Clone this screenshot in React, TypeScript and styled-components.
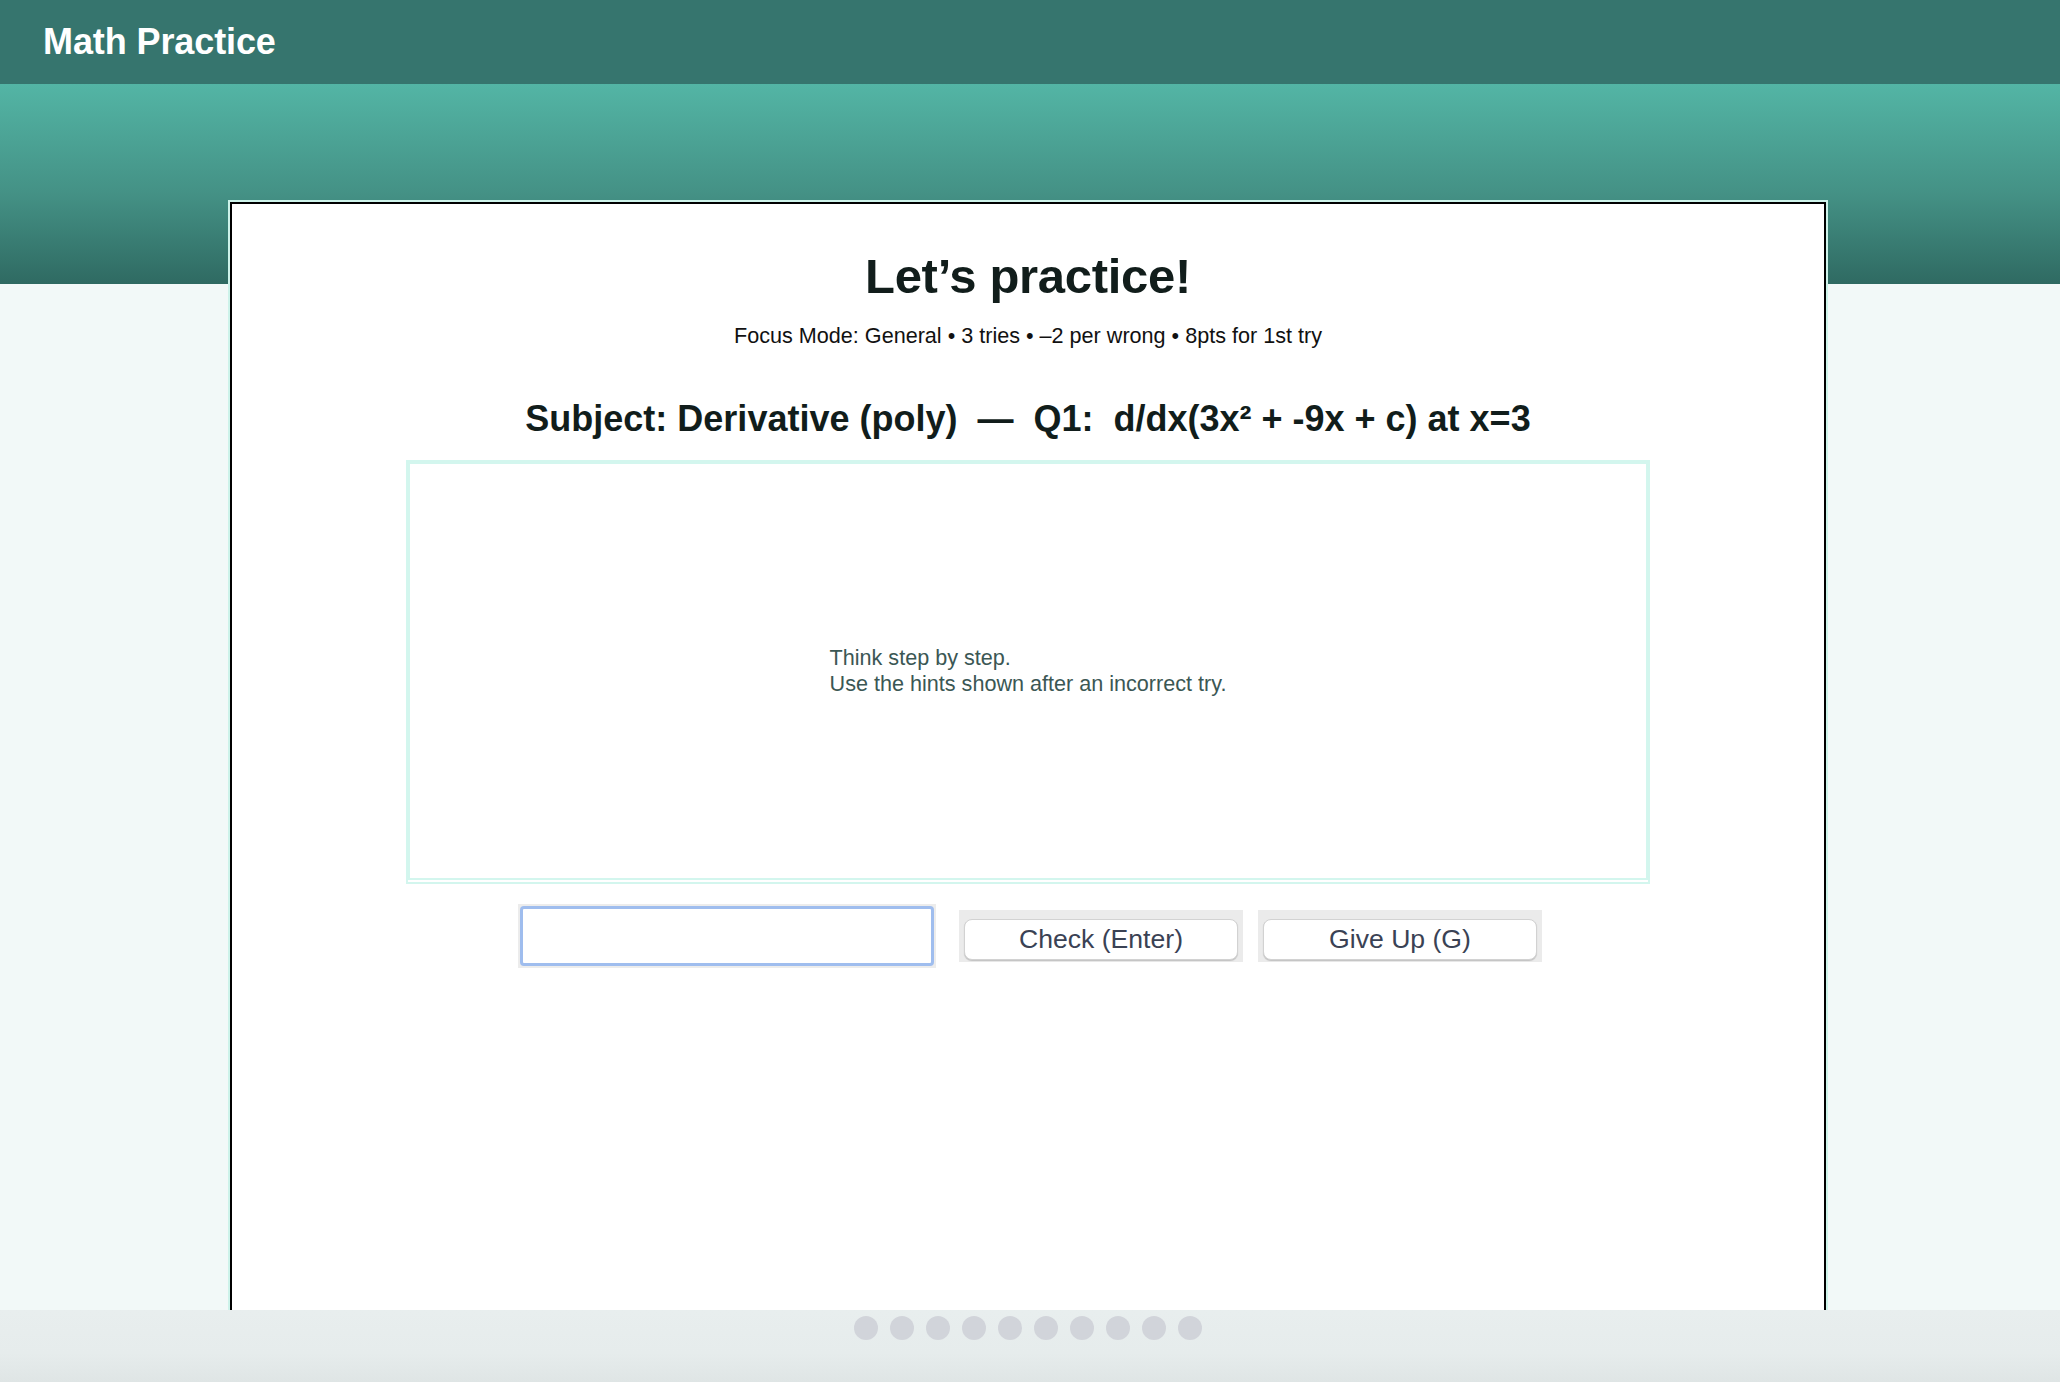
import React from "react";
import styled, { createGlobalStyle } from "styled-components";

const Global = createGlobalStyle`
  html, body { margin: 0; padding: 0; }
  body {
    background: #f2f9f8;
    font-family: "Liberation Sans", Helvetica, Arial, sans-serif;
    color: #111d1b;
  }
`;

const Page = styled.div`
  min-height: 100vh;
  display: flex;
  flex-direction: column;
`;

const Header = styled.header`
  height: 84px;
  background: #36756e;
  display: flex;
  align-items: center;
  padding-left: 43px;
`;

const Brand = styled.h1`
  margin: 0;
  font-size: 36px;
  font-weight: 700;
  color: #ffffff;
  letter-spacing: -0.1px;
`;

const Band = styled.div`
  height: 200px;
  background: linear-gradient(180deg, #53b5a5 0%, #449185 55%, #2f6a62 100%);
`;

const Card = styled.main`
  margin: -82px 234px 0 230px;
  min-height: 1240px;
  background: #ffffff;
  border: 2px solid #000000;
  outline: 2px solid #cdf3ea;
  display: flex;
  flex-direction: column;
  align-items: center;
`;

const Title = styled.h2`
  margin: 44px 0 0;
  font-size: 49px;
  line-height: 56px;
  font-weight: 700;
  color: #111d1b;
  letter-spacing: -0.3px;
`;

const Meta = styled.p`
  margin: 20px 0 0;
  font-size: 21.6px;
  line-height: 24px;
  color: #111111;
`;

const Question = styled.h3`
  margin: 49px 0 0;
  font-size: 36px;
  line-height: 44px;
  font-weight: 700;
  color: #111d1b;
  white-space: nowrap;
`;

const HintBox = styled.section`
  margin-top: 19px;
  width: 1244px;
  height: 424px;
  box-sizing: border-box;
  border: 4px solid #d3f6ee;
  border-bottom: 6px double #d3f6ee;
  display: flex;
  align-items: center;
  justify-content: center;
`;

const HintText = styled.div`
  font-size: 21.6px;
  line-height: 26px;
  color: #3b5754;
  text-align: left;
`;

const Controls = styled.div`
  margin-top: 20px;
  display: flex;
  align-items: center;
  padding-left: 4px;
`;

const InputFrame = styled.div`
  width: 418px;
  height: 64px;
  box-sizing: border-box;
  padding: 2px;
  background: #ececec;
  margin-right: 23px;
`;

const AnswerInput = styled.input`
  width: 100%;
  height: 100%;
  box-sizing: border-box;
  border: 3px solid #9fbdee;
  border-radius: 4px;
  background: #ffffff;
  outline: none;
  font-size: 22px;
  font-family: inherit;
  padding: 0 10px;
`;

const ButtonWell = styled.div<{ $gap?: number }>`
  width: 284px;
  height: 52px;
  box-sizing: border-box;
  background: #ebebeb;
  padding: 9px 5px 2px;
  margin-right: ${(p) => p.$gap ?? 0}px;
`;

const Button = styled.button`
  width: 100%;
  height: 100%;
  box-sizing: border-box;
  background: #ffffff;
  border: 1px solid #d2d2d2;
  border-radius: 8px;
  box-shadow: 0 1px 1px rgba(0, 0, 0, 0.18);
  font-family: "Liberation Sans", Helvetica, Arial, sans-serif;
  font-size: 26.6px;
  color: #3a4254;
  padding: 0;
  cursor: pointer;
`;

const Footer = styled.footer`
  position: fixed;
  left: 0;
  right: 0;
  bottom: 0;
  height: 72px;
  background: linear-gradient(180deg, #e8eeee 0%, #e6ecec 60%, #dfe5e5 100%);
  display: flex;
  justify-content: center;
  align-items: flex-start;
  gap: 12px;
  padding: 6px 4px 0 0;
  box-sizing: border-box;
`;

const Dot = styled.span`
  width: 24px;
  height: 24px;
  border-radius: 50%;
  background: #d1d4da;
`;

export default function App() {
  return (
    <Page>
      <Global />
      <Header>
        <Brand>Math Practice</Brand>
      </Header>
      <Band />
      <Card>
        <Title>Let’s practice!</Title>
        <Meta>Focus Mode: General • 3 tries • –2 per wrong • 8pts for 1st try</Meta>
        <Question>
          {"Subject: Derivative (poly)\u00a0\u00a0—\u00a0\u00a0Q1:\u00a0\u00a0d/dx(3x² + -9x + c) at x=3"}
        </Question>
        <HintBox>
          <HintText>
            Think step by step.
            <br />
            Use the hints shown after an incorrect try.
          </HintText>
        </HintBox>
        <Controls>
          <InputFrame>
            <AnswerInput aria-label="answer" />
          </InputFrame>
          <ButtonWell $gap={15}>
            <Button>Check (Enter)</Button>
          </ButtonWell>
          <ButtonWell>
            <Button>Give Up (G)</Button>
          </ButtonWell>
        </Controls>
      </Card>
      <Footer>
        {Array.from({ length: 10 }).map((_, i) => (
          <Dot key={i} />
        ))}
      </Footer>
    </Page>
  );
}
